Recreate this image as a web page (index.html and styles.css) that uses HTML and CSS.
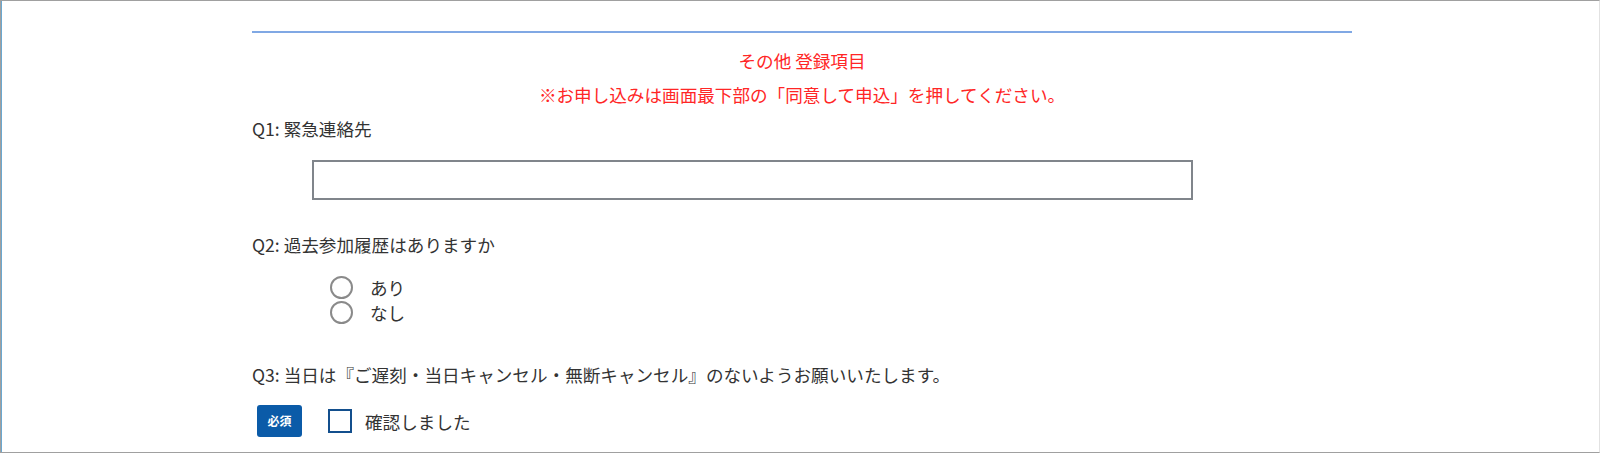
FILE: index.html
```html
<!DOCTYPE html>
<html>
<head>
    <title>その他 登録項目</title>
    <link rel="stylesheet" href="styles.css">
</head>
<body>
    <div class="frame">
        <div class="form">
            <div class="divider"></div>
            <p class="notice">その他 登録項目</p>
            <p class="notice">※お申し込みは画面最下部の「同意して申込」を押してください。</p>

            <p class="q-label">Q1: 緊急連絡先</p>
            <input type="text" class="text-input">

            <p class="q-label q2">Q2: 過去参加履歴はありますか</p>
            <div class="radios">
                <label class="radio-row"><input type="radio" name="q2" class="radio"><span>あり</span></label>
                <label class="radio-row"><input type="radio" name="q2" class="radio"><span>なし</span></label>
            </div>

            <p class="q-label q3">Q3: 当日は『ご遅刻・当日キャンセル・無断キャンセル』のないようお願いいたします。</p>
            <div class="confirm">
                <span class="badge">必須</span>
                <label class="check-row"><input type="checkbox" class="check"><span>確認しました</span></label>
            </div>
        </div>
    </div>
</body>
</html>
```

FILE: styles.css
```css
html, body {
    margin: 0;
    padding: 0;
    background: #fff;
}
body {
    font-family: "Noto Sans CJK JP", "Noto Sans", sans-serif;
    font-size: 17.6px;
    color: #333;
}
.frame {
    box-sizing: border-box;
    height: 453px;
    border-top: 1px solid #a0a0a0;
    border-bottom: 1px solid #a0a0a0;
    border-left: 1px solid #a0a0a0;
    border-right: 1px solid #e2e2e2;
    box-shadow: inset 1px 0 0 #6aa8d0;
    overflow: hidden;
}
.form {
    width: 1100px;
    margin-left: 251px;
    padding-top: 30px;
}
.divider {
    height: 2px;
    background: #80a8e4;
    margin-bottom: 11px;
}
.notice {
    margin: 0;
    line-height: 34px;
    text-align: center;
    color: #ff2626;
}
.q-label {
    margin: 0;
    line-height: 34px;
}
.q2 {
    margin-top: 28px;
}
.q3 {
    margin-top: 33px;
}
.text-input {
    display: block;
    box-sizing: border-box;
    width: 881px;
    height: 40px;
    margin: 14px 0 0 60px;
    border: 2px solid #80858b;
    border-radius: 0;
    outline: none;
}
.radios {
    margin-top: 13px;
    padding-left: 78px;
}
.radio-row {
    display: flex;
    align-items: center;
    height: 25px;
    gap: 17px;
}
.radio {
    appearance: none;
    box-sizing: border-box;
    width: 23px;
    height: 23px;
    margin: 0;
    border: 2px solid #8a8a8a;
    border-radius: 50%;
}
.confirm {
    display: flex;
    align-items: center;
    margin-top: 13px;
    padding-left: 5px;
}
.badge {
    width: 45px;
    height: 32px;
    line-height: 32px;
    text-align: center;
    background: #0b5ba8;
    border-radius: 3px;
    color: #fff;
    font-size: 12px;
    font-weight: bold;
    margin-right: 26px;
}
.check-row {
    display: flex;
    align-items: center;
    gap: 13px;
}
.check {
    appearance: none;
    box-sizing: border-box;
    width: 24px;
    height: 24px;
    margin: 0;
    border: 2px solid #134f8d;
    border-radius: 0;
}
```
